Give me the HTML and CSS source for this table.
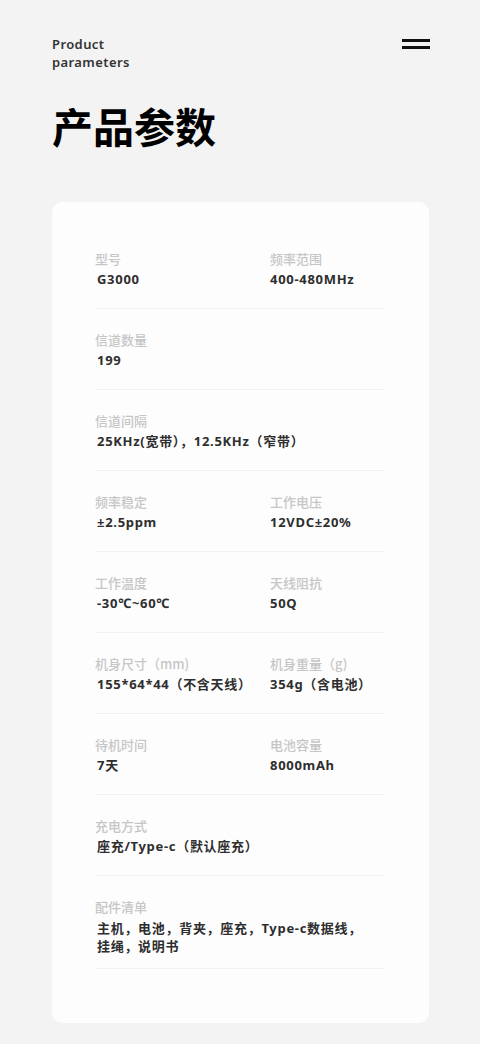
FILE: index.html
```html
<!DOCTYPE html>
<html lang="zh-CN">
<head>
<meta charset="utf-8">
<title>产品参数</title>
<link rel="stylesheet" href="styles.css">
</head>
<body>
<div class="page">
  <header class="top">
    <div class="eyebrow">Product<br>parameters</div>
    <div class="menu" aria-label="menu"><span></span><span></span></div>
  </header>
  <h1 class="title">产品参数</h1>
  <section class="card">
    <div class="row">
      <div class="cell"><div class="label">型号</div><div class="value">G3000</div></div>
      <div class="cell"><div class="label">频率范围</div><div class="value">400-480MHz</div></div>
    </div>
    <div class="row">
      <div class="cell"><div class="label">信道数量</div><div class="value">199</div></div>
    </div>
    <div class="row">
      <div class="cell"><div class="label">信道间隔</div><div class="value">25KHz(宽带），12.5KHz（窄带）</div></div>
    </div>
    <div class="row">
      <div class="cell"><div class="label">频率稳定</div><div class="value">±2.5ppm</div></div>
      <div class="cell"><div class="label">工作电压</div><div class="value">12VDC±20%</div></div>
    </div>
    <div class="row">
      <div class="cell"><div class="label">工作温度</div><div class="value">-30℃~60℃</div></div>
      <div class="cell"><div class="label">天线阻抗</div><div class="value">50Q</div></div>
    </div>
    <div class="row">
      <div class="cell"><div class="label">机身尺寸（mm)</div><div class="value">155*64*44（不含天线）</div></div>
      <div class="cell"><div class="label">机身重量（g)</div><div class="value">354g（含电池）</div></div>
    </div>
    <div class="row">
      <div class="cell"><div class="label">待机时间</div><div class="value">7天</div></div>
      <div class="cell"><div class="label">电池容量</div><div class="value">8000mAh</div></div>
    </div>
    <div class="row">
      <div class="cell"><div class="label">充电方式</div><div class="value">座充/Type-c（默认座充）</div></div>
    </div>
    <div class="row last">
      <div class="cell"><div class="label">配件清单</div><div class="value multi">主机，电池，背夹，座充，Type-c数据线，<br>挂绳，说明书</div></div>
    </div>
  </section>
</div>
</body>
</html>
```

FILE: styles.css
```css
* { box-sizing: border-box; }
html, body { margin: 0; padding: 0; }
body {
  background: #f3f3f3;
  font-family: "Noto Sans", "Noto Sans CJK SC", sans-serif;
  color: #222;
}
.page {
  width: 480px;
  padding: 35px 51px 22px 52px;
}
.top {
  display: flex;
  justify-content: space-between;
  align-items: flex-start;
}
.eyebrow {
  font-size: 13px;
  line-height: 18px;
  font-weight: 600;
  letter-spacing: 0.4px;
  color: #333;
}
.menu {
  display: flex;
  flex-direction: column;
  gap: 4px;
  width: 28px;
  margin-top: 4px;
  margin-right: -1px;
}
.menu span {
  display: block;
  height: 3px;
  background: #111;
}
.title {
  margin: 26px 0 0;
  font-family: "Noto Sans CJK SC", sans-serif;
  font-size: 41px;
  line-height: 56px;
  font-weight: 700;
  color: #000;
}
.card {
  margin-top: 49px;
  background: #fdfdfd;
  border-radius: 10px;
  padding: 26px 44px 54px 43px;
}
.row {
  display: grid;
  grid-template-columns: 175px 1fr;
  padding: 21px 0 19px;
  border-bottom: 1px solid #f1f1f1;
}
.row.last {
  padding-bottom: 13px;
}
.label {
  font-family: "Noto Sans CJK SC", sans-serif;
  font-size: 13px;
  line-height: 20px;
  font-weight: 500;
  color: #c6c6c6;
}
.value {
  font-family: "Noto Sans", "Noto Sans CJK SC", sans-serif;
  font-size: 13px;
  line-height: 20px;
  font-weight: 700;
  letter-spacing: 0.7px;
  color: #2e2e2e;
  white-space: nowrap;
}
.cell:first-child .value {
  padding-left: 2px;
}
.value.multi {
  line-height: 18px;
  margin-top: 2px;
}
```
